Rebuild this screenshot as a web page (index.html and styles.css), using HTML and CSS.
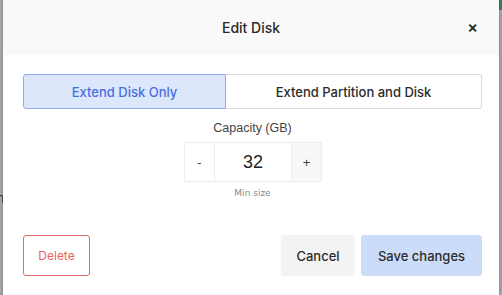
FILE: index.html
```html
<!DOCTYPE html>
<html lang="en">
<head>
    <meta charset="UTF-8">
    <meta name="viewport" content="width=device-width, initial-scale=1.0">
    <title>Edit Disk</title>
    <link rel="stylesheet" href="styles.css">
</head>
<body>

    <!-- Page behind the overlay -->
    <div class="backdrop">
        <span class="backdrop-text">Name</span>
        <span class="backdrop-tag"></span>
    </div>

    <!-- Edit Disk modal -->
    <div class="modal">
        <div class="modal-header">
            <span class="modal-title">Edit Disk</span>
            <button class="close-btn">&times;</button>
        </div>

        <div class="modal-body">
            <div class="segmented">
                <button class="segment active">Extend Disk Only</button>
                <button class="segment">Extend Partition and Disk</button>
            </div>

            <div class="capacity">
                <label class="capacity-label">Capacity (GB)</label>
                <div class="stepper">
                    <button class="step-btn">-</button>
                    <input class="step-input" type="text" value="32">
                    <button class="step-btn plus">+</button>
                </div>
                <span class="hint">Min size</span>
            </div>
        </div>

        <div class="modal-footer">
            <button class="btn btn-delete">Delete</button>
            <div class="footer-right">
                <button class="btn btn-cancel">Cancel</button>
                <button class="btn btn-save">Save changes</button>
            </div>
        </div>
    </div>

</body>
</html>
```

FILE: styles.css
```css
body {
    margin: 0;
    height: 295px;
    overflow: hidden;
    background-color: #a4a4a4;
    font-family: Inter, "Noto Sans", sans-serif;
    position: relative;
}

/* Dimmed page behind the modal */
.backdrop {
    position: absolute;
    inset: 0;
}

.backdrop-text {
    position: absolute;
    left: -24px;
    top: 190px;
    font-size: 13px;
    color: #3c3450;
}

.backdrop-tag {
    position: absolute;
    right: 0;
    top: 0;
    width: 3px;
    height: 10px;
    background: #3f7a5e;
}

.modal {
    position: relative;
    margin-left: 3px;
    width: 496px;
    height: 295px;
    background: #ffffff;
    box-shadow: 0 0 2px rgba(0, 0, 0, 0.35);
    display: flex;
    flex-direction: column;
}

.modal-header {
    height: 55px;
    background: #f9f9f9;
    display: flex;
    justify-content: center;
    align-items: center;
    position: relative;
}

.modal-title {
    font-size: 14px;
    font-weight: 500;
    color: #2a2a2a;
}

.close-btn {
    position: absolute;
    right: 21px;
    top: 19px;
    border: none;
    background: none;
    font-family: Inter, sans-serif;
    font-size: 16px;
    font-weight: 600;
    line-height: 1;
    color: #222;
    padding: 0;
    cursor: pointer;
}

.modal-body {
    padding: 19px 17px 0 20px;
}

.segmented {
    display: flex;
    height: 35px;
}

.segment {
    font-family: Inter, sans-serif;
    font-size: 13px;
    font-weight: 500;
    background: #fff;
    color: #2b2b2b;
    border: 1px solid #dadada;
    margin: 0;
    cursor: pointer;
}

.segment:first-child {
    width: 203px;
    border-radius: 3px 0 0 3px;
}

.segment:last-child {
    flex: 1;
    border-left: none;
    border-radius: 0 3px 3px 0;
}

.segment.active {
    background: #dce7fc;
    border-color: #8ea9ef;
    color: #4a6ddf;
}

.capacity {
    display: flex;
    flex-direction: column;
    align-items: center;
    margin-top: 12px;
}

.capacity-label {
    font-family: "Liberation Sans", Arial, sans-serif;
    font-size: 12.5px;
    color: #444;
    margin-bottom: 7px;
}

.stepper {
    display: flex;
    height: 38px;
    border: 1px solid #ececec;
    margin-left: 1px;
}

.step-btn {
    width: 29px;
    border: none;
    background: #fff;
    font-family: "Liberation Sans", Arial, sans-serif;
    font-size: 13px;
    color: #444;
    padding: 0;
}

.step-btn.plus {
    background: #f8f8f8;
}

.step-input {
    width: 76px;
    border: none;
    border-left: 1px solid #ececec;
    border-right: 1px solid #ececec;
    padding: 0;
    text-align: center;
    font-family: "Liberation Sans", Arial, sans-serif;
    font-size: 18px;
    color: #222;
    outline: none;
}

.hint {
    font-family: "DejaVu Sans", Verdana, sans-serif;
    font-size: 9px;
    color: #8a8a8a;
    margin-top: 6px;
}

.modal-footer {
    display: flex;
    justify-content: space-between;
    padding: 0 17px 0 20px;
    margin-top: 37px;
}

.footer-right {
    display: flex;
    gap: 6px;
}

.btn {
    height: 41px;
    border-radius: 3px;
    font-family: Inter, sans-serif;
    font-size: 13px;
    font-weight: 500;
    padding: 0;
    cursor: pointer;
}

.btn-delete {
    width: 67px;
    background: #fff;
    border: 1px solid #e66a6a;
    color: #ea5f5f;
    font-size: 12px;
    font-weight: 400;
}

.btn-cancel {
    width: 74px;
    background: #f3f3f3;
    border: none;
    color: #2b2b2b;
}

.btn-save {
    width: 121px;
    background: #cbdcf9;
    border: none;
    color: #2b2b2b;
}
```
